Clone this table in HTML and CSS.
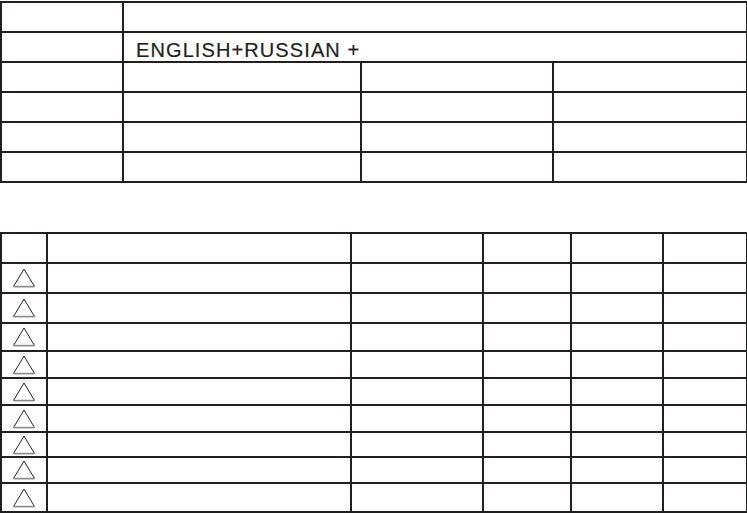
FILE: index.html
```html
<!DOCTYPE html>
<html>
<head>
<meta charset="utf-8">
<link rel="stylesheet" href="styles.css">
</head>
<body>
<table class="grid info">
  <colgroup><col class="c1"><col class="c2"><col class="c3"><col class="c4"></colgroup>
  <tr class="r30"><td></td><td colspan="3"></td></tr>
  <tr class="r30"><td></td><td colspan="3" class="lang"><span>ENGLISH+RUSSIAN +</span></td></tr>
  <tr class="r30"><td></td><td></td><td></td><td></td></tr>
  <tr class="r30"><td></td><td></td><td></td><td></td></tr>
  <tr class="r30"><td></td><td></td><td></td><td></td></tr>
  <tr class="r30"><td></td><td></td><td></td><td></td></tr>
</table>

<table class="grid list">
  <colgroup><col class="d1"><col class="d2"><col class="d3"><col class="d4"><col class="d5"><col class="d6"></colgroup>
  <tr class="h30"><td></td><td></td><td></td><td></td><td></td><td></td></tr>
  <tr class="h30"><td class="tri"><svg width="24" height="20" viewBox="0 0 24 20"><path d="M1.5 18.5 L12 1 L22.5 18.5" fill="none" stroke="#222" stroke-width="1"/><path d="M1.5 18.6 H22.5" stroke="#888" stroke-width="1.6"/></svg></td><td></td><td></td><td></td><td></td><td></td></tr>
  <tr class="h30"><td class="tri"><svg width="24" height="20" viewBox="0 0 24 20"><path d="M1.5 18.5 L12 1 L22.5 18.5" fill="none" stroke="#222" stroke-width="1"/><path d="M1.5 18.6 H22.5" stroke="#888" stroke-width="1.6"/></svg></td><td></td><td></td><td></td><td></td><td></td></tr>
  <tr class="h28"><td class="tri"><svg width="24" height="20" viewBox="0 0 24 20"><path d="M1.5 18.5 L12 1 L22.5 18.5" fill="none" stroke="#222" stroke-width="1"/><path d="M1.5 18.6 H22.5" stroke="#888" stroke-width="1.6"/></svg></td><td></td><td></td><td></td><td></td><td></td></tr>
  <tr class="h27"><td class="tri"><svg width="24" height="20" viewBox="0 0 24 20"><path d="M1.5 18.5 L12 1 L22.5 18.5" fill="none" stroke="#222" stroke-width="1"/><path d="M1.5 18.6 H22.5" stroke="#888" stroke-width="1.6"/></svg></td><td></td><td></td><td></td><td></td><td></td></tr>
  <tr class="h27"><td class="tri"><svg width="24" height="20" viewBox="0 0 24 20"><path d="M1.5 18.5 L12 1 L22.5 18.5" fill="none" stroke="#222" stroke-width="1"/><path d="M1.5 18.6 H22.5" stroke="#888" stroke-width="1.6"/></svg></td><td></td><td></td><td></td><td></td><td></td></tr>
  <tr class="h27"><td class="tri"><svg width="24" height="20" viewBox="0 0 24 20"><path d="M1.5 18.5 L12 1 L22.5 18.5" fill="none" stroke="#222" stroke-width="1"/><path d="M1.5 18.6 H22.5" stroke="#888" stroke-width="1.6"/></svg></td><td></td><td></td><td></td><td></td><td></td></tr>
  <tr class="h25"><td class="tri"><svg width="24" height="20" viewBox="0 0 24 20"><path d="M1.5 18.5 L12 1 L22.5 18.5" fill="none" stroke="#222" stroke-width="1"/><path d="M1.5 18.6 H22.5" stroke="#888" stroke-width="1.6"/></svg></td><td></td><td></td><td></td><td></td><td></td></tr>
  <tr class="h26"><td class="tri"><svg width="24" height="20" viewBox="0 0 24 20"><path d="M1.5 18.5 L12 1 L22.5 18.5" fill="none" stroke="#222" stroke-width="1"/><path d="M1.5 18.6 H22.5" stroke="#888" stroke-width="1.6"/></svg></td><td></td><td></td><td></td><td></td><td></td></tr>
  <tr class="h29"><td class="tri"><svg width="24" height="20" viewBox="0 0 24 20"><path d="M1.5 18.5 L12 1 L22.5 18.5" fill="none" stroke="#222" stroke-width="1"/><path d="M1.5 18.6 H22.5" stroke="#888" stroke-width="1.6"/></svg></td><td></td><td></td><td></td><td></td><td></td></tr>
</table>
</body>
</html>
```

FILE: styles.css
```css
html, body {
  margin: 0;
  padding: 0;
  background: #fff;
}
body {
  font-family: "Liberation Sans", Arial, sans-serif;
  color: #231f20;
}
.grid {
  border-collapse: collapse;
  table-layout: fixed;
  width: 746px;
}
.grid td {
  border: 2px solid #231f20;
  padding: 0;
}
.info {
  margin-top: 1px;
}
.list {
  margin-top: 49px;
}
.c1 { width: 122px; }
.c2 { width: 238px; }
.c3 { width: 192px; }
.c4 { width: 194px; }
.d1 { width: 46px; }
.d2 { width: 304px; }
.d3 { width: 132px; }
.d4 { width: 88px; }
.d5 { width: 92px; }
.d6 { width: 84px; }
.r30 td, .h30 td { height: 28px; }
.h29 td { height: 27px; }
.h28 td { height: 26px; }
.h27 td { height: 25px; }
.h26 td { height: 24px; }
.h25 td { height: 23px; }
.grid td.lang {
  font-size: 0;
  line-height: 0;
  padding: 0 0 0 12px;
  vertical-align: middle;
}
.lang span {
  display: inline-block;
  font-size: 20px;
  letter-spacing: 1.1px;
  line-height: 16px;
  height: 16px;
  padding-top: 6px;
  overflow: visible;
  -webkit-text-stroke: 0.2px #231f20;
}
.tri {
  text-align: center;
  vertical-align: middle;
  line-height: 0;
}
.tri svg {
  display: inline-block;
}
```
